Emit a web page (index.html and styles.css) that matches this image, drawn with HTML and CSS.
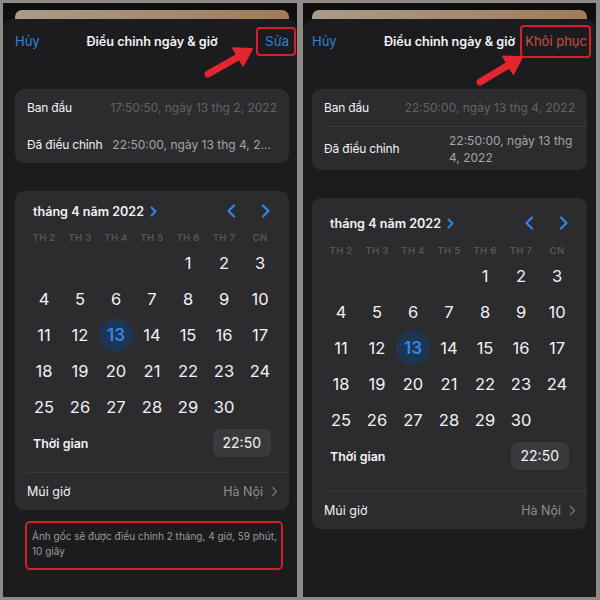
FILE: index.html
```html
<!DOCTYPE html>
<html lang="vi">
<head>
    <meta charset="UTF-8">
    <meta name="viewport" content="width=device-width, initial-scale=1.0">
    <title>Điều chỉnh ngày &amp; giờ</title>
    <link rel="stylesheet" href="styles.css">
</head>
<body>

    <!-- màn hình 1: trước khi sửa -->
    <div class="phone phone-a">
        <div class="peek"><div class="peek-card"></div></div>
        <div class="sheet">
            <div class="nav">
                <span class="nav-link">Hủy</span>
                <span class="nav-title">Điều chỉnh ngày &amp; giờ</span>
                <span class="nav-link nav-right"><span class="mark mark-a">Sửa</span></span>
            </div>

            <div class="card info">
                <div class="info-row">
                    <span class="info-label">Ban đầu</span>
                    <span class="info-value dim">17:50:50, ngày 13 thg 2, 2022</span>
                </div>
                <div class="info-row">
                    <span class="info-label">Đã điều chỉnh</span>
                    <span class="info-value clip">22:50:00, ngày 13 thg 4, 2022</span>
                </div>
            </div>

            <div class="card cal">
                <div class="cal-head">
                    <span class="cal-month">tháng 4 năm 2022
                        <svg class="chev-sm" width="7" height="11" viewBox="0 0 7 11"><path d="M1.5 1.5 L5.5 5.5 L1.5 9.5"/></svg>
                    </span>
                    <span class="cal-nav">
                        <svg class="chev" width="10" height="14" viewBox="0 0 10 14"><path d="M8 1.5 L2.5 7 L8 12.5"/></svg>
                        <svg class="chev" width="10" height="14" viewBox="0 0 10 14"><path d="M2 1.5 L7.5 7 L2 12.5"/></svg>
                    </span>
                </div>
                <div class="weekdays">
                    <span>TH 2</span><span>TH 3</span><span>TH 4</span><span>TH 5</span><span>TH 6</span><span>TH 7</span><span>CN</span>
                </div>
                <div class="days">
                    <span></span><span></span><span></span><span></span><span>1</span><span>2</span><span>3</span>
                    <span>4</span><span>5</span><span>6</span><span>7</span><span>8</span><span>9</span><span>10</span>
                    <span>11</span><span>12</span><span class="today">13</span><span>14</span><span>15</span><span>16</span><span>17</span>
                    <span>18</span><span>19</span><span>20</span><span>21</span><span>22</span><span>23</span><span>24</span>
                    <span>25</span><span>26</span><span>27</span><span>28</span><span>29</span><span>30</span><span></span>
                </div>
                <div class="time-row">
                    <span class="time-label">Thời gian</span>
                    <span class="time-pill">22:50</span>
                </div>
                <div class="zone-row">
                    <span>Múi giờ</span>
                    <span class="zone-value">Hà Nội
                        <svg class="chev-grey" width="7" height="11" viewBox="0 0 7 11"><path d="M1.5 1.5 L5.5 5.5 L1.5 9.5"/></svg>
                    </span>
                </div>
            </div>

            <div class="note">Ảnh gốc sẽ được điều chỉnh 2 tháng, 4 giờ, 59 phút, 10 giây</div>
        </div>
        <svg class="arrow" width="294" height="594">
            <line x1="205" y1="71" x2="236" y2="53.5"/>
            <polygon points="249,46 240,62.6 230.2,45.2"/>
        </svg>
    </div>

    <!-- màn hình 2: sau khi sửa -->
    <div class="phone phone-b">
        <div class="peek"><div class="peek-card"></div></div>
        <div class="sheet">
            <div class="nav">
                <span class="nav-link">Hủy</span>
                <span class="nav-title">Điều chỉnh ngày &amp; giờ</span>
                <span class="nav-link nav-right restore"><span class="mark mark-b">Khôi phục</span></span>
            </div>

            <div class="card info">
                <div class="info-row">
                    <span class="info-label">Ban đầu</span>
                    <span class="info-value dim">22:50:00, ngày 13 thg 4, 2022</span>
                </div>
                <div class="info-row tall">
                    <span class="info-label">Đã điều chỉnh</span>
                    <span class="info-value wrap">22:50:00, ngày 13 thg<br>4, 2022</span>
                </div>
            </div>

            <div class="card cal">
                <div class="cal-head">
                    <span class="cal-month">tháng 4 năm 2022
                        <svg class="chev-sm" width="7" height="11" viewBox="0 0 7 11"><path d="M1.5 1.5 L5.5 5.5 L1.5 9.5"/></svg>
                    </span>
                    <span class="cal-nav">
                        <svg class="chev" width="10" height="14" viewBox="0 0 10 14"><path d="M8 1.5 L2.5 7 L8 12.5"/></svg>
                        <svg class="chev" width="10" height="14" viewBox="0 0 10 14"><path d="M2 1.5 L7.5 7 L2 12.5"/></svg>
                    </span>
                </div>
                <div class="weekdays">
                    <span>TH 2</span><span>TH 3</span><span>TH 4</span><span>TH 5</span><span>TH 6</span><span>TH 7</span><span>CN</span>
                </div>
                <div class="days">
                    <span></span><span></span><span></span><span></span><span>1</span><span>2</span><span>3</span>
                    <span>4</span><span>5</span><span>6</span><span>7</span><span>8</span><span>9</span><span>10</span>
                    <span>11</span><span>12</span><span class="today">13</span><span>14</span><span>15</span><span>16</span><span>17</span>
                    <span>18</span><span>19</span><span>20</span><span>21</span><span>22</span><span>23</span><span>24</span>
                    <span>25</span><span>26</span><span>27</span><span>28</span><span>29</span><span>30</span><span></span>
                </div>
                <div class="time-row">
                    <span class="time-label">Thời gian</span>
                    <span class="time-pill">22:50</span>
                </div>
                <div class="zone-row">
                    <span>Múi giờ</span>
                    <span class="zone-value">Hà Nội
                        <svg class="chev-grey" width="7" height="11" viewBox="0 0 7 11"><path d="M1.5 1.5 L5.5 5.5 L1.5 9.5"/></svg>
                    </span>
                </div>
            </div>
        </div>
        <svg class="arrow" width="293" height="594">
            <line x1="177" y1="79" x2="206" y2="61.8"/>
            <polygon points="219,54 210.4,70.8 200.2,53.6"/>
        </svg>
    </div>

</body>
</html>
```

FILE: styles.css
```css
html, body {
    margin: 0;
    height: 100%;
}
body {
    box-sizing: border-box;
    background: #8d8a87;
    padding: 3px 4px 3px 3px;
    display: grid;
    grid-template-columns: 294px 293px;
    column-gap: 6px;
    font-family: 'Inter', 'Noto Sans', sans-serif;
    color: #f2f2f4;
}
.phone {
    position: relative;
    display: flex;
    flex-direction: column;
    background: #0f0f10;
    overflow: hidden;
}
.phone-a {
    --pl: 12px;
    --pr: 8px;
}
.phone-b {
    --pl: 9px;
    --pr: 9px;
}
.peek {
    height: 16px;
    box-sizing: border-box;
    padding: 7px var(--pr) 0 var(--pl);
}
.peek-card {
    height: 9px;
    border-radius: 7px 7px 0 0;
    background: linear-gradient(90deg, #a89c8b, #a17c58);
}
.sheet {
    flex: 1;
    background: #1c1c1e;
    border-radius: 10px 10px 0 0;
    padding: 0 var(--pr) 0 var(--pl);
}

/* thanh tiêu đề */
.nav {
    height: 44px;
    display: grid;
    grid-template-columns: 1fr auto 1fr;
    align-items: center;
}
.nav-link {
    font-size: 13px;
    color: #3383d8;
}
.nav-right {
    justify-self: end;
}
.restore {
    color: #c9504a;
}
.nav-title {
    font-size: 12.6px;
    font-weight: 600;
    color: #f4f4f6;
}
.mark {
    display: inline-block;
    border: 2px solid #d4202b;
    border-radius: 4px;
}
.mark-a {
    padding: 4px 5px 5px 7px;
    margin: -6px -7px -7px -9px;
}
.mark-b {
    padding: 6px 2px 7px 3px;
    margin: -8px -4px -9px -5px;
}

/* thẻ */
.card {
    background: #2c2c2e;
    border-radius: 9px;
}
.info {
    margin-top: 26px;
}
.info-row {
    height: 37px;
    display: flex;
    align-items: center;
    padding: 0 12px;
    font-size: 12px;
    gap: 10px;
}
.info-row.tall {
    height: 43px;
    border-top: 1px solid #3a3a3d;
    margin-left: 12px;
    padding-left: 0;
}
.info-label {
    white-space: nowrap;
    letter-spacing: -0.2px;
}
.info-value {
    flex: 1;
    min-width: 0;
    text-align: right;
    color: #a4a4a9;
    white-space: nowrap;
}
.info-value.dim {
    color: #626266;
}
.info-value.clip {
    overflow: hidden;
    text-overflow: ellipsis;
}
.info-value.wrap {
    flex: none;
    width: 126px;
    margin-left: auto;
    text-align: left;
    line-height: 17px;
}

/* lịch */
.cal {
    margin-top: 28px;
}
.cal-head {
    height: 20px;
    padding: 10px 18px 0;
    display: flex;
    align-items: center;
    justify-content: space-between;
}
.phone-b .cal-head {
    padding-top: 15px;
}
.cal-month {
    font-size: 12.6px;
    font-weight: 600;
    display: flex;
    align-items: center;
    gap: 6px;
}
.cal-nav {
    display: flex;
    gap: 25px;
    align-items: center;
}
.chev-sm path, .chev path, .chev-grey path {
    fill: none;
    stroke: #2f86e8;
    stroke-width: 2;
    stroke-linecap: round;
    stroke-linejoin: round;
}
.chev path {
    stroke-width: 2.2;
}
.chev-grey path {
    stroke: #6e6e73;
    stroke-width: 1.5;
}
.weekdays, .days {
    display: grid;
    grid-template-columns: repeat(7, 36px);
    padding: 0 11px;
    text-align: center;
}
.weekdays {
    margin-top: 10px;
    height: 14px;
    line-height: 14px;
    font-size: 9.5px;
    font-weight: 600;
    color: #56565a;
    letter-spacing: 0.3px;
}
.phone-b .weekdays {
    margin-top: 11px;
}
.days span {
    height: 36px;
    display: flex;
    align-items: center;
    justify-content: center;
    font-size: 16.5px;
}
.days .today {
    width: 34px;
    height: 34px;
    margin: 1px;
    border-radius: 50%;
    background: #1e3652;
    color: #2e88f0;
    font-weight: 600;
    font-size: 17px;
}
.time-row {
    display: flex;
    align-items: center;
    justify-content: space-between;
    padding: 4px 18px 15px;
}
.phone-b .time-row {
    padding-bottom: 21px;
}
.time-label {
    font-size: 12.4px;
    font-weight: 600;
}
.time-pill {
    background: #3a3a3c;
    border-radius: 7px;
    height: 28px;
    line-height: 28px;
    padding: 0 10px;
    font-size: 14px;
}
.zone-row {
    height: 37px;
    margin-left: 12px;
    padding-right: 11px;
    border-top: 1px solid #3a3a3d;
    display: flex;
    align-items: center;
    justify-content: space-between;
    font-size: 12.5px;
}
.zone-value {
    color: #8e8e93;
    display: flex;
    align-items: center;
    gap: 8px;
}

/* ghi chú */
.note {
    margin: 11px 6px 0 10px;
    border: 2px solid #d4202b;
    border-radius: 5px;
    padding: 6px 2px 9px 5px;
    font-size: 10px;
    line-height: 15px;
    color: #9a9a9e;
}

/* mũi tên chú thích */
.arrow {
    position: absolute;
    top: 0;
    left: 0;
    pointer-events: none;
}
.arrow line {
    stroke: #e3262f;
    stroke-width: 7;
    stroke-linecap: round;
}
.arrow polygon {
    fill: #e3262f;
    stroke: #e3262f;
    stroke-width: 2;
    stroke-linejoin: round;
}
```
